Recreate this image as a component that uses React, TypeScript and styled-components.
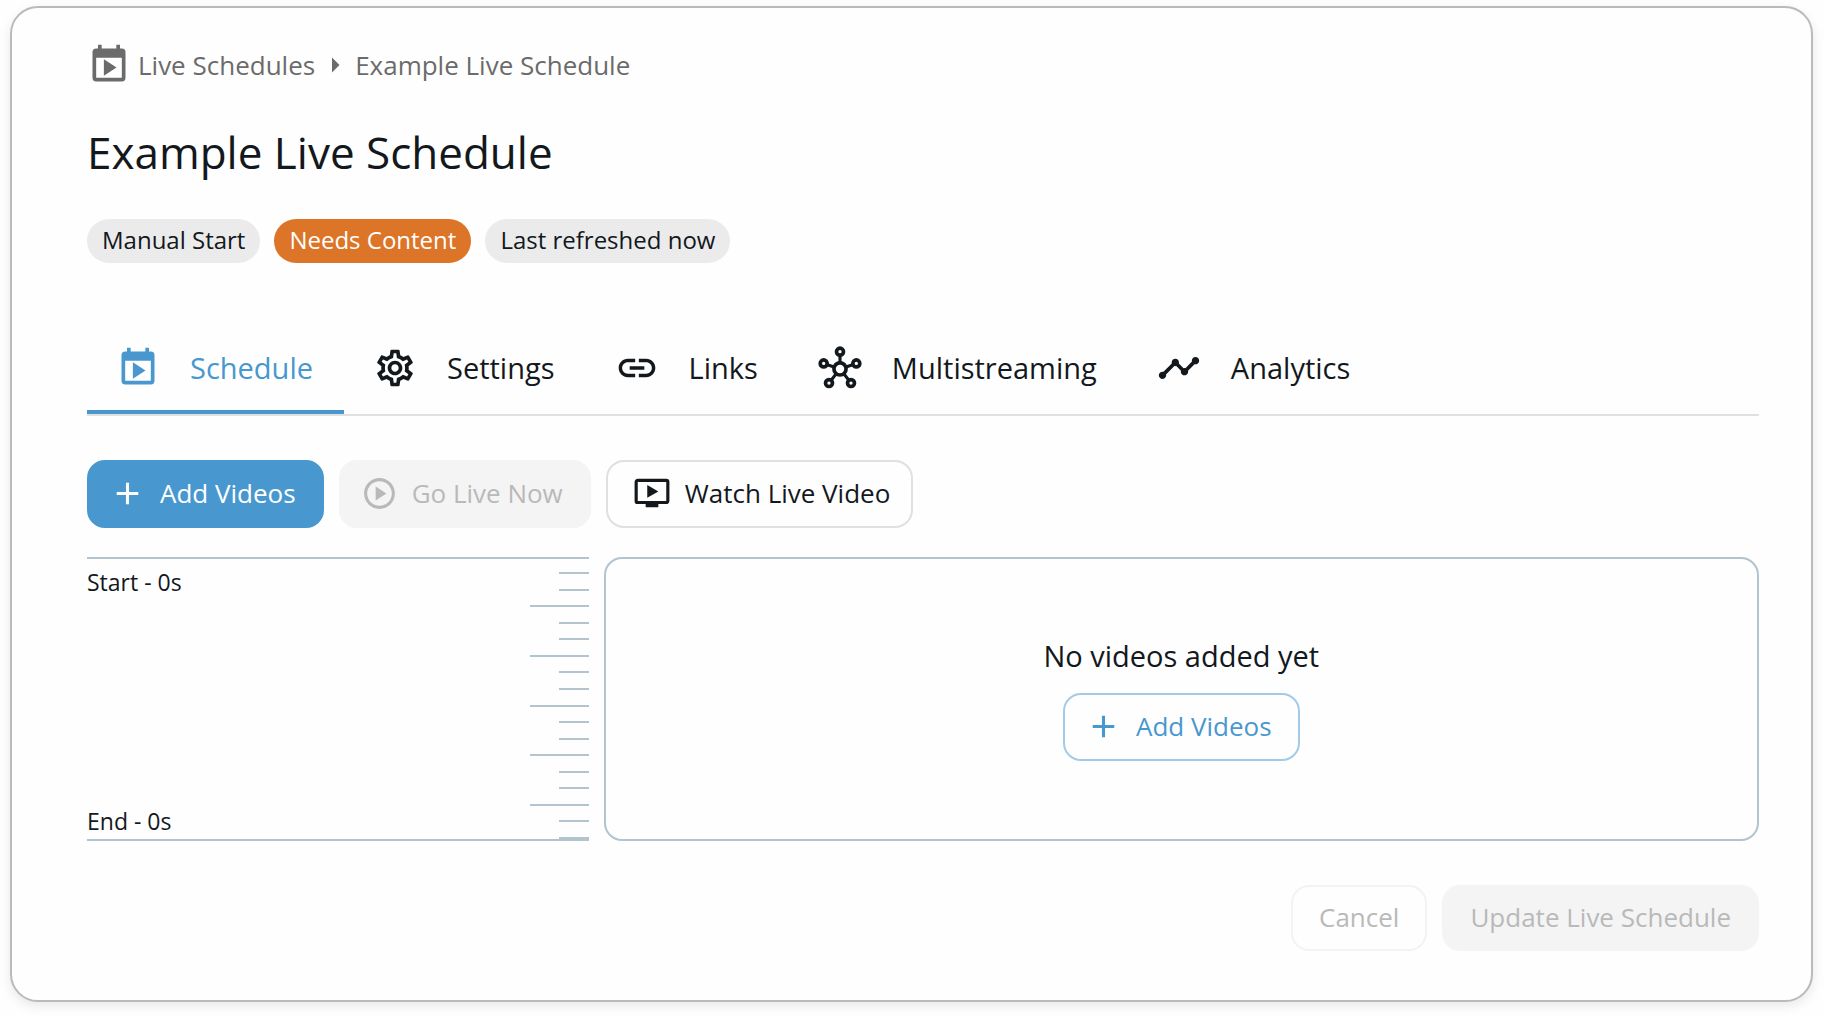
import React, { useState } from "react";
import styled, { createGlobalStyle, css } from "styled-components";
import {
  MdAdd,
  MdLink,
  MdOndemandVideo,
  MdOutlinePlayCircle,
  MdOutlineSettings,
  MdTimeline,
  MdArrowRight,
} from "react-icons/md";

const color = {
  ink: "#13181d",
  muted: "#6b6b6b",
  blue: "#4898cf",
  orange: "#dc7528",
  chip: "#ebebeb",
  rule: "#e0e0e0",
  slate: "#b3c4ce",
  disabledBg: "#f4f4f4",
  disabledText: "#b9b9b9",
};

const GlobalStyle = createGlobalStyle`
  *, *::before, *::after { box-sizing: border-box; }
  body {
    margin: 0;
    background: #fefefe;
    color: ${color.ink};
    font-family: "Open Sans", "Noto Sans", sans-serif;
  }
  button { font-family: inherit; cursor: pointer; }
  svg { display: block; flex: none; }
`;

const Page = styled.div`
  padding: 6px 11px 14px 10px;
`;

const Card = styled.main`
  padding: 35px 52px 49px 75px;
  border: 2px solid #bababa;
  border-radius: 28px;
  background: #fefefe;
  box-shadow: 0 4px 12px rgba(0, 0, 0, 0.09);
`;

const Breadcrumb = styled.nav`
  display: flex;
  align-items: center;
  gap: 2px;
  color: ${color.muted};
  font-size: 26px;
  line-height: 44px;
`;

const BreadcrumbLink = styled.a`
  display: flex;
  align-items: center;
  gap: 7px;
  color: inherit;
  text-decoration: none;
`;

const Title = styled.h1`
  margin: 35px 0 37px;
  font-size: 44px;
  font-weight: 400;
  line-height: 60px;
`;

const Chips = styled.div`
  display: flex;
  flex-wrap: wrap;
  gap: 14px;
`;

const Chip = styled.span<{ $warning?: boolean }>`
  padding: 0 15px 2px;
  border-radius: 22px;
  background: ${(p) => (p.$warning ? color.orange : color.chip)};
  color: ${(p) => (p.$warning ? "#fff" : color.ink)};
  font-size: 24px;
  line-height: 42px;
`;

const Tabs = styled.div`
  display: flex;
  margin-top: 58px;
  border-bottom: 2px solid ${color.rule};
`;

const Tab = styled.button<{ $active: boolean }>`
  display: flex;
  align-items: center;
  gap: 30px;
  height: 93px;
  padding: 4px 31px 0 29px;
  border: 0;
  border-bottom: 4px solid ${(p) => (p.$active ? color.blue : "transparent")};
  background: none;
  color: ${(p) => (p.$active ? color.blue : color.ink)};
  font-size: 29px;
  white-space: nowrap;
`;

const Actions = styled.div<{ $end?: boolean }>`
  display: flex;
  flex-wrap: wrap;
  gap: 15px;
  justify-content: ${(p) => (p.$end ? "flex-end" : "flex-start")};
  margin-top: 44px;
`;

type Look = "primary" | "outline" | "neutral" | "filled" | "ghost";

const looks = {
  primary: css`
    padding: 0 26px 2px 20px;
    border-color: ${color.blue};
    background: ${color.blue};
    color: #fff;
  `,
  outline: css`
    padding: 0 26px 2px 20px;
    border-color: #a3cbe7;
    color: ${color.blue};
  `,
  neutral: css`
    padding: 0 21px 2px 25px;
    border-color: ${color.rule};
    color: ${color.ink};
  `,
  filled: css`
    padding: 0 26px 2px 20px;
    border-color: ${color.disabledBg};
    background: ${color.disabledBg};
    color: ${color.disabledText};
  `,
  ghost: css`
    border-color: #f3f3f3;
    color: ${color.disabledText};
  `,
};

const Button = styled.button<{ $look: Look; $plain?: boolean }>`
  display: inline-flex;
  align-items: center;
  justify-content: center;
  gap: 14px;
  height: ${(p) => (p.$plain ? 66 : 68)}px;
  border: 2px solid transparent;
  border-radius: 18px;
  background: none;
  font-size: 26px;
  white-space: nowrap;
  ${(p) => looks[p.$look]}
  ${(p) => p.$plain && "padding: 0 26px 2px;"}
  &:disabled { cursor: default; }
`;

const Timeline = styled.section`
  display: flex;
  gap: 15px;
  min-height: 284px;
  margin-top: 29px;
`;

const Ruler = styled.div`
  display: flex;
  justify-content: space-between;
  width: 30%;
  border: solid ${color.slate};
  border-width: 2px 0;
`;

const RulerLabels = styled.div`
  display: flex;
  flex-direction: column;
  justify-content: space-between;
  padding: 6px 0 1px;
  font-size: 23px;
  line-height: 34px;
`;

const Ticks = styled.div`
  display: flex;
  flex-direction: column;
  align-items: flex-end;
  justify-content: space-between;
  padding-top: 13px;
`;

const Tick = styled.span<{ $long: boolean }>`
  width: ${(p) => (p.$long ? 59 : 30)}px;
  height: 2px;
  background: ${color.slate};
`;

const Empty = styled.div`
  display: flex;
  flex: 1;
  flex-direction: column;
  align-items: center;
  justify-content: center;
  gap: 18px;
  border: 2px solid ${color.slate};
  border-radius: 18px;
`;

const EmptyText = styled.p`
  margin: 0;
  font-size: 29px;
  line-height: 38px;
`;

function CalendarPlay() {
  return (
    <svg width="44" height="44" viewBox="0 0 24 24" fill="currentColor" aria-hidden="true">
      <path
        fillRule="evenodd"
        d="M6 1h2v2h8V1h2v2h1a2 2 0 0 1 2 2v14a2 2 0 0 1-2 2H5a2 2 0 0 1-2-2V5a2 2 0 0 1 2-2h1zM5 8v11h14V8z"
      />
      <path d="M9.2 8.9v9l6.9-4.5z" />
    </svg>
  );
}

const hubNodes = [
  [12, 3.1],
  [3.1, 9.5],
  [20.9, 9.5],
  [6, 20.2],
  [18, 20.2],
];

function Hub() {
  return (
    <svg
      width="44"
      height="44"
      viewBox="0 0 24 24"
      fill="#fefefe"
      stroke="currentColor"
      strokeWidth="2"
      overflow="visible"
      aria-hidden="true"
    >
      {hubNodes.map(([x, y]) => (
        <g key={`${x}-${y}`}>
          <path d={`M12 12.5L${x} ${y}`} strokeWidth="1.7" />
          <circle cx={x} cy={y} r="1.9" />
        </g>
      ))}
      <circle cx="12" cy="12.5" r="3.3" />
    </svg>
  );
}

const tabs = [
  { name: "Schedule", icon: <CalendarPlay /> },
  { name: "Settings", icon: <MdOutlineSettings size={44} /> },
  { name: "Links", icon: <MdLink size={44} /> },
  { name: "Multistreaming", icon: <Hub /> },
  { name: "Analytics", icon: <MdTimeline size={44} /> },
];

const ticks = Array.from({ length: 17 }, (_, i) => i % 3 === 2);

export default function App() {
  const [active, setActive] = useState("Schedule");

  return (
    <>
      <GlobalStyle />
      <Page>
        <Card>
          <Breadcrumb aria-label="Breadcrumb">
            <BreadcrumbLink href="#schedules">
              <CalendarPlay />
              Live Schedules
            </BreadcrumbLink>
            <MdArrowRight size={36} />
            <span>Example Live Schedule</span>
          </Breadcrumb>

          <Title>Example Live Schedule</Title>

          <Chips>
            <Chip>Manual Start</Chip>
            <Chip $warning>Needs Content</Chip>
            <Chip>Last refreshed now</Chip>
          </Chips>

          <Tabs role="tablist">
            {tabs.map((tab) => (
              <Tab
                key={tab.name}
                type="button"
                role="tab"
                aria-selected={active === tab.name}
                $active={active === tab.name}
                onClick={() => setActive(tab.name)}
              >
                {tab.icon}
                {tab.name}
              </Tab>
            ))}
          </Tabs>

          <Actions>
            <Button type="button" $look="primary">
              <MdAdd size={37} />
              Add Videos
            </Button>
            <Button type="button" $look="filled" disabled>
              <MdOutlinePlayCircle size={37} />
              Go Live Now
            </Button>
            <Button type="button" $look="neutral">
              <MdOndemandVideo size={38} />
              Watch Live Video
            </Button>
          </Actions>

          <Timeline>
            <Ruler>
              <RulerLabels>
                <span>Start - 0s</span>
                <span>End - 0s</span>
              </RulerLabels>
              <Ticks aria-hidden="true">
                {ticks.map((long, i) => (
                  <Tick key={i} $long={long} />
                ))}
              </Ticks>
            </Ruler>
            <Empty>
              <EmptyText>No videos added yet</EmptyText>
              <Button type="button" $look="outline">
                <MdAdd size={37} />
                Add Videos
              </Button>
            </Empty>
          </Timeline>

          <Actions $end>
            <Button type="button" $look="ghost" $plain disabled>
              Cancel
            </Button>
            <Button type="button" $look="filled" $plain disabled>
              Update Live Schedule
            </Button>
          </Actions>
        </Card>
      </Page>
    </>
  );
}
